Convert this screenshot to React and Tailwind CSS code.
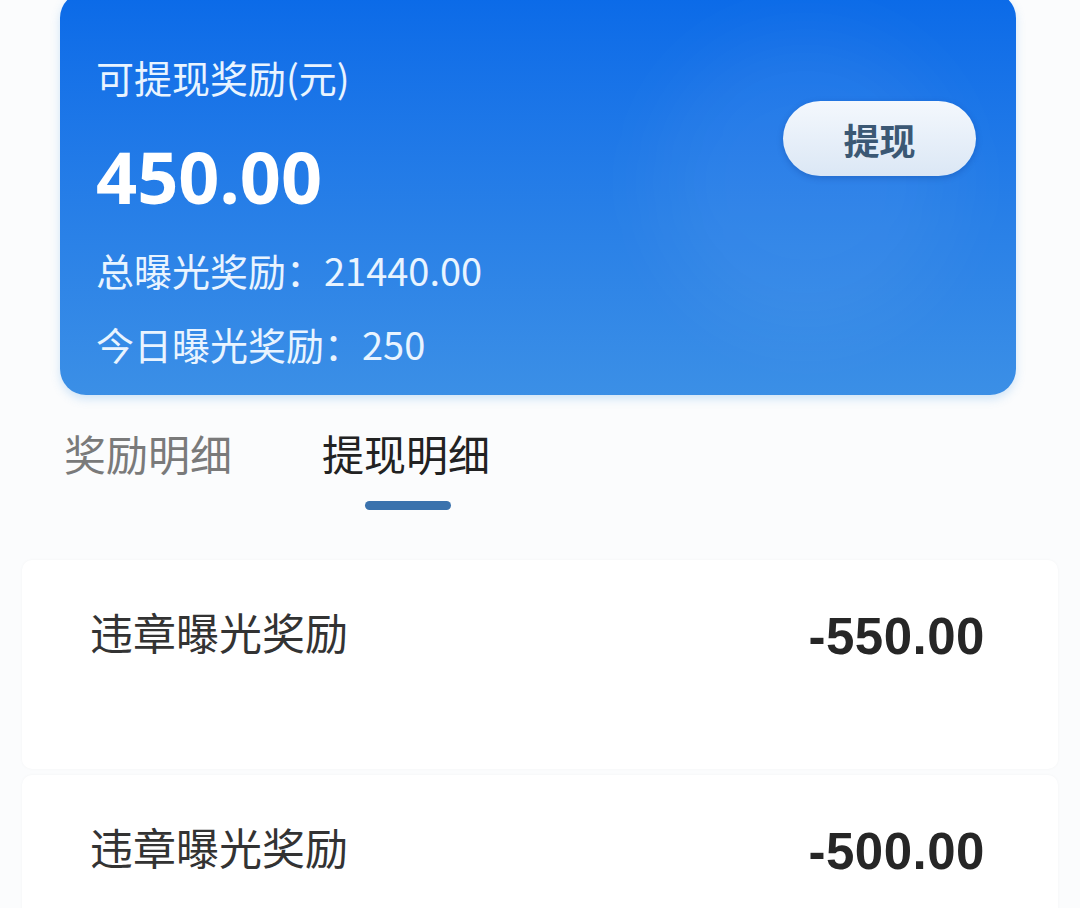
import React from 'react';

const cjk = { fontFamily: '"Noto Sans CJK SC", "Noto Sans", sans-serif' };
const num = { fontFamily: '"Liberation Sans", Arial, sans-serif' };

const records = [
  { title: '违章曝光奖励', amount: '-550.00' },
  { title: '违章曝光奖励', amount: '-500.00' },
];

function BalanceCard() {
  return (
    <div className="relative ml-[60px] mr-[64px] mt-[-8px] h-[403px] overflow-hidden rounded-[26px] bg-linear-to-b from-[#0a6ae8] to-[#3b8fe6] shadow-[0_4px_10px_rgba(80,160,230,0.25)]">
      {/* faint decorative glow */}
      <div className="absolute right-[60px] top-[40px] h-[300px] w-[300px] rounded-full bg-white/5 blur-2xl" />
      <div className="relative flex justify-between pl-[36px] pr-[40px] pt-[63px]">
        <div className="flex flex-col text-[#e9f4ff]">
          <span className="text-[38px] leading-[44px]" style={cjk}>可提现奖励(元)</span>
          <span className="mt-[41px] text-[72px] font-bold leading-[72px] text-white" style={{ fontFamily: '"Noto Sans", sans-serif' }}>
            450.00
          </span>
          <span className="mt-[36px] text-[38px] leading-[44px]" style={cjk}>总曝光奖励：21440.00</span>
          <span className="mt-[30px] text-[38px] leading-[44px]" style={cjk}>今日曝光奖励：250</span>
        </div>
        <button
          className="mt-[46px] h-[75px] w-[193px] rounded-full bg-linear-to-b from-[#f4f8fd] to-[#dbe7f5] text-[36px] font-bold text-[#3b5874] shadow-[0_2px_6px_rgba(0,40,120,0.25)]"
          style={cjk}
        >
          提现
        </button>
      </div>
    </div>
  );
}

function Tabs() {
  return (
    <div className="flex gap-[90px] pl-[64px] pt-[30px]" style={cjk}>
      <div className="text-[42px] leading-[56px] text-[#7a7a7a]">奖励明细</div>
      <div className="flex flex-col items-center">
        <div className="text-[42px] leading-[56px] text-[#222]">提现明细</div>
        <div className="ml-[3px] mt-[20px] h-[9px] w-[86px] rounded-full bg-[#3a72ad]" />
      </div>
    </div>
  );
}

export default function App() {
  return (
    <div className="h-[908px] w-[1080px] overflow-hidden bg-[#fbfcfd]">
      <BalanceCard />
      <Tabs />
      <div className="mt-[50px] flex flex-col gap-[6px] px-[22px]">
        {records.map((r, i) => (
          <div
            key={i}
            className="flex h-[209px] items-start justify-between rounded-[10px] bg-white pl-[68px] pr-[73px] pt-[43px] shadow-[0_0_3px_rgba(0,0,0,0.04)]"
          >
            <span className="text-[43px] leading-[56px] text-[#333]" style={cjk}>{r.title}</span>
            <span className="mt-[6px] text-[51px] font-bold leading-[56px] tracking-[0.5px] text-[#262626]" style={num}>
              {r.amount}
            </span>
          </div>
        ))}
      </div>
    </div>
  );
}
